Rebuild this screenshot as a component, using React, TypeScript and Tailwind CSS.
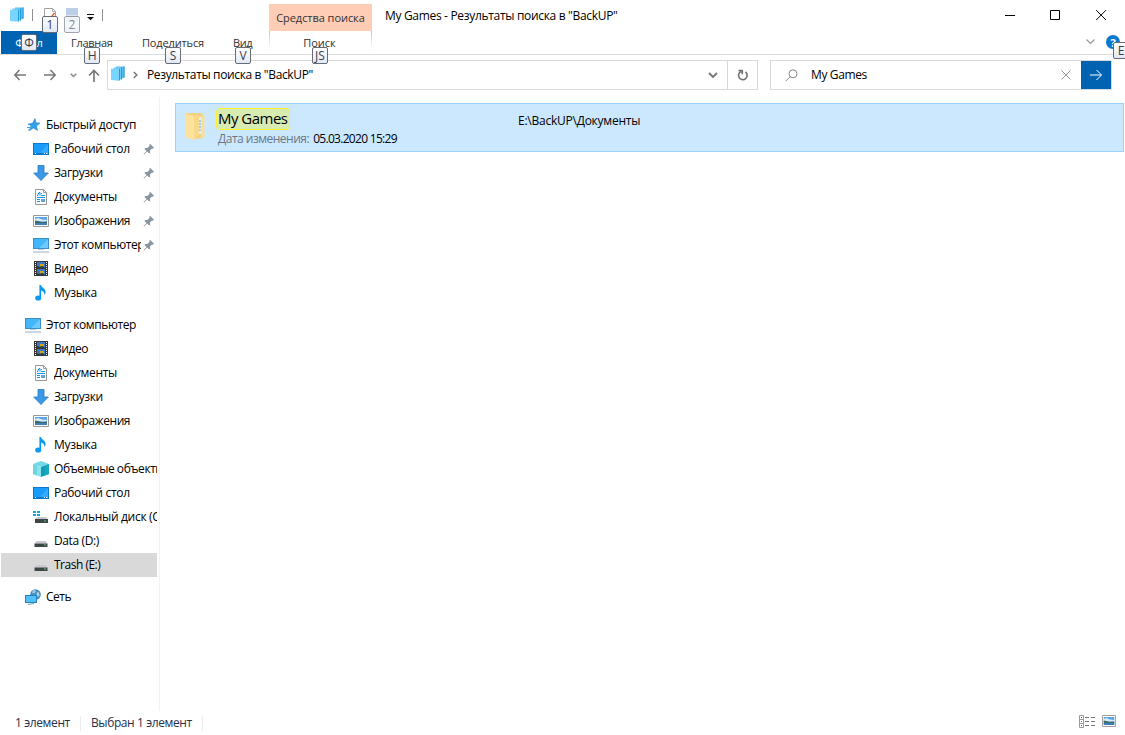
import type { ReactNode } from "react";
import clsx from "clsx";

type IconName =
  | "star"
  | "desktop"
  | "download"
  | "document"
  | "picture"
  | "computer"
  | "video"
  | "music"
  | "cube"
  | "system"
  | "drive"
  | "network";

interface NavItem {
  label: string;
  icon: IconName;
  tracking: string;
  pinned?: boolean;
  selected?: boolean;
}

interface NavGroup {
  label: string;
  icon: IconName;
  tracking: string;
  items: NavItem[];
}

const groups: NavGroup[] = [
  {
    label: "Быстрый доступ",
    icon: "star",
    tracking: "tracking-[-0.3px]",
    items: [
      { label: "Рабочий стол", icon: "desktop", tracking: "tracking-[-0.3px]", pinned: true },
      { label: "Загрузки", icon: "download", tracking: "tracking-[-0.38px]", pinned: true },
      { label: "Документы", icon: "document", tracking: "tracking-[-0.3px]", pinned: true },
      { label: "Изображения", icon: "picture", tracking: "tracking-[-0.42px]", pinned: true },
      { label: "Этот компьютер", icon: "computer", tracking: "tracking-[-0.38px]", pinned: true },
      { label: "Видео", icon: "video", tracking: "tracking-[-0.45px]" },
      { label: "Музыка", icon: "music", tracking: "tracking-[-0.3px]" },
    ],
  },
  {
    label: "Этот компьютер",
    icon: "computer",
    tracking: "tracking-[-0.4px]",
    items: [
      { label: "Видео", icon: "video", tracking: "tracking-[-0.45px]" },
      { label: "Документы", icon: "document", tracking: "tracking-[-0.3px]" },
      { label: "Загрузки", icon: "download", tracking: "tracking-[-0.38px]" },
      { label: "Изображения", icon: "picture", tracking: "tracking-[-0.42px]" },
      { label: "Музыка", icon: "music", tracking: "tracking-[-0.3px]" },
      { label: "Объемные объекты", icon: "cube", tracking: "tracking-[-0.45px]" },
      { label: "Рабочий стол", icon: "desktop", tracking: "tracking-[-0.3px]" },
      { label: "Локальный диск (C:)", icon: "system", tracking: "tracking-[-0.3px]" },
      { label: "Data (D:)", icon: "drive", tracking: "tracking-[-0.38px]" },
      { label: "Trash (E:)", icon: "drive", tracking: "tracking-[-0.5px]", selected: true },
    ],
  },
  { label: "Сеть", icon: "network", tracking: "tracking-[-0.5px]", items: [] },
];

const drawings: Record<IconName, ReactNode> = {
  star: (
    <>
      <path d="M10 1.500l1 4.300 4 .4-3.500 2.600 1 4.700-4-2.500-4 2.500 1.500-4.500-2.500-2 4-.700z" fill="#2fa2ee" stroke="#2a7fc0" strokeWidth=".6" />
      <path d="M3 7.500h2M2 10.500h3M3 13h2" stroke="#3b9bdd" />
    </>
  ),
  desktop: (
    <>
      <path d="M0 2h16v12H0z" fill="#0878d3" />
      <path d="M1 3h14v9H1z" fill="#1a9bfb" />
      <path d="M15 3v9H7z" fill="#38aaff" />
      <path d="M2 12.500h1M11 12.500h1M13 12.500h1.500" stroke="#fff" />
    </>
  ),
  download: <path d="M5 .5h6v7.500h4.300L8 15.500.7 8H5z" fill="#3b97e8" stroke="#2577bf" strokeWidth=".8" />,
  document: (
    <>
      <path d="M2.500.5h8l3 3v12h-11z" fill="#fff" stroke="#999" />
      <path d="M10.500.5v3h3" fill="none" stroke="#999" />
      <path d="M4 6.500h1v-2h1v-1h1v3M8 4.500h1M8 6.500h4M4 8.500h8M4 10.500h3M4 12.500h3" fill="none" stroke="#1b93ea" />
      <path d="M8 10h4v3H8z" fill="#5ba8e0" />
    </>
  ),
  picture: (
    <>
      <path d="M.5 2.500h15v11H.5z" fill="#fff" stroke="#999" />
      <path d="M2 4h12v8H2z" fill="#5aa5e6" />
      <path d="M2 6l3-1 4 1.500 5 .5v1.500H2z" fill="#dceaf4" />
      <path d="M2 7.500l3 .5 4 1 5-.5v1.500H2z" fill="#3c6c62" />
      <path d="M2 10h12v2H2z" fill="#3d7fb4" />
    </>
  ),
  computer: (
    <>
      <path d="M0 1h16v11H0z" fill="#3f8fc4" />
      <path d="M1 2h14v9H1z" fill="#43b5fa" />
      <path d="M15 2v9H6z" fill="#6ccaff" />
      <path d="M5 12.500h6" stroke="#bccbd5" />
      <path d="M0 15h16" stroke="#9fb1c0" />
    </>
  ),
  video: (
    <>
      <path d="M1 0h14v15H1z" fill="#383838" />
      <path d="M4 1h8v6H4zM4 8h8v6H4z" fill="#3f77c4" />
      <path d="M7 3h4v2H9v1H7zM7 10h4v2H9v1H7z" fill="#d8a021" />
      <path d="M4 5l2 1 3-1 3 2H4zM4 12l2 1 3-1 3 2H4z" fill="#263d38" />
      <path d="M2.500 1v14M13.500 1v14" stroke="#eee" strokeDasharray="1 1" />
    </>
  ),
  music: (
    <>
      <ellipse cx="5.200" cy="13" rx="3" ry="2.600" fill="#0b98f5" />
      <path d="M6.400 0H8c.3 2.700 5.100 3.500 4.600 7.500-.1 1-.6 2-1.300 2.600.5-2.300-.9-4-3.100-4.600V13H6.400z" fill="#0b98f5" />
    </>
  ),
  cube: (
    <>
      <path d="M8 0l8 3-8 3-8-3z" fill="#70d9e5" />
      <path d="M0 3l8 3v10l-8-3z" fill="#8ce3ec" />
      <path d="M16 3L8 6v10l8-3z" fill="#109db8" />
      <path d="M0 3l4 1.500V14.500L0 13z" fill="#6fd3e0" />
      <path d="M16 3l-4 1.500V14.500l4-1.500z" fill="#1ba9c0" />
    </>
  ),
  system: (
    <>
      <path d="M0 2h3v2H0zM4 2h3v2H4zM0 5h3v2H0zM4 5h3v2H4z" fill="#08a8e8" />
      <path d="M4 8h9l2 2H2z" fill="#c5c8cc" />
      <path d="M2 10h13v4H2z" fill="#424548" />
      <path d="M11 12h2" stroke="#37dc61" />
    </>
  ),
  drive: (
    <>
      <path d="M3.500 8h9l2 2.500h-13z" fill="#c7cace" />
      <path d="M1.500 10.500h13V14h-13z" fill="#424548" />
      <path d="M11 12h2" stroke="#37dc61" />
    </>
  ),
  network: (
    <>
      <circle cx="10.500" cy="5.500" r="5.300" fill="#4c8dbb" />
      <path d="M7 3l2-2 2 1-1 1.500-2 1zM12 3l2 .5.500 3-1.500 1.500-1.500-2z" fill="#a8cfe4" />
      <path d="M0 6h12v8H0z" fill="#2385bf" />
      <path d="M1 7h10v6H1z" fill="#54bfff" />
      <path d="M3 15.500l6-1" stroke="#809fb3" />
    </>
  ),
};

function NavIcon({ name }: { name: IconName }) {
  return (
    <svg width="16" height="16" viewBox="0 0 16 16" className="shrink-0">
      {drawings[name]}
    </svg>
  );
}

function PinIcon() {
  return (
    <svg width="12" height="12" viewBox="0 0 12 12" className="shrink-0">
      <path d="M7 .8l4 4-1.200.9-.8-.2-2 2 .1 2.500-1 .6-2-2L1 11.500l-.5-.5 3-3-2-2 .7-1 2.300.1 2-2-.2-1z" fill="#8796a1" />
    </svg>
  );
}

// Stacked blue panes of the search results window
function ResultsIcon() {
  return (
    <svg width="16" height="16" viewBox="0 0 16 16" className="shrink-0">
      <path d="M6 .5h8V12l-3 .5H6z" fill="#5dbdee" />
      <path d="M13.500.500l1.200-.3v11.300l-1.200.5z" fill="#259bdd" />
      <path d="M3.500 1.500h8v12h-8z" fill="#6dccf9" />
      <path d="M11 1.500l1-.3v12l-1 .5z" fill="#239ddd" />
      <path d="M1 2.800l8 .2v11.800l-8-.8z" fill="#79d5ff" />
      <path d="M9 3.200l1-.7v11.800l-1 .5z" fill="#209dde" />
    </svg>
  );
}

function KeyTip({ children, className }: { children: string; className: string }) {
  return (
    <span
      className={clsx(
        "absolute z-10 flex h-[17px] w-4 items-center justify-center rounded-[2px] border border-[#666b75] bg-linear-to-b from-white to-[#e2e9f5] text-[12px] leading-none text-[#3d3d48]",
        className,
      )}
    >
      {children}
    </span>
  );
}

function TitleBar() {
  return (
    <header className="relative flex h-[31px]">
      <div className="relative flex w-[269px] pl-[9px] pt-[7px]">
        <ResultsIcon />
        <span className="ml-[7px] mt-[2px] h-3 w-px bg-[#929292]" />
        <svg width="14" height="16" viewBox="0 0 14 16" className="ml-[10px]">
          <path d="M1.500 1.500h8l3 3v11h-11z" fill="#fff" stroke="#a2a2a2" />
          <path d="M9.500 1.500v3h3" fill="none" stroke="#b7b7b7" />
          <path d="M9 9l2.500-3" stroke="#e55c34" strokeWidth="1.500" />
        </svg>
        <svg width="14" height="16" viewBox="0 0 14 16" className="ml-[8px]">
          <path d="M1 1h12v7H1z" fill="#bccfe9" />
          <path d="M1 8h12v7H1z" fill="#dfe5ef" />
        </svg>
        <svg width="8" height="8" viewBox="0 0 8 8" className="ml-[7px] mt-[6px]">
          <path d="M1 1h7v1H1zM1 4h7L4.500 7.200z" fill="#111" />
        </svg>
        <span className="ml-[8px] mt-[2px] h-3 w-px bg-[#929292]" />
        <KeyTip className="left-[42px] top-[16px]">1</KeyTip>
        <KeyTip className="left-[64px] top-[16px] opacity-60">2</KeyTip>
      </div>
      <div className="mt-1 flex h-[27px] w-[103px] items-center justify-center bg-[#ffcdb5] pt-px text-[11px] tracking-[-0.05px] text-[#333]">
        Средства поиска
      </div>
      <h1 className="ml-[13px] mt-[7px] text-[12px] leading-[17px] tracking-[-0.32px]">
        My Games - Результаты поиска в "BackUP"
      </h1>
      <div className="ml-auto mr-[18px] mt-[10px] flex">
        <svg width="11" height="11" viewBox="0 0 11 11">
          <path d="M0 5.500h10" stroke="#000" />
        </svg>
        <svg width="11" height="11" viewBox="0 0 11 11" className="ml-[34px]">
          <path d="M.5.500h9v9h-9z" fill="none" stroke="#000" />
        </svg>
        <svg width="11" height="11" viewBox="0 0 11 11" className="ml-[35px]">
          <path d="M.2.200l9.800 9.800M10 .2L.2 10" stroke="#000" />
        </svg>
      </div>
    </header>
  );
}

function RibbonTabs() {
  return (
    <nav className="relative flex h-6 border-b border-[#dadbdc] text-[11px] leading-[24px] text-[#2f2f2f]">
      <div className="relative ml-px h-[23px] w-14 bg-[#0063b1] text-center tracking-[-0.2px] text-white">
        Файл
        <KeyTip className="left-[20px] top-[3px]">Ф</KeyTip>
      </div>
      <div className="relative ml-[14px] w-[43px] tracking-[-0.3px]">
        Главная
        <KeyTip className="left-[13px] top-[16px]">H</KeyTip>
      </div>
      <div className="relative ml-[28px] w-[62px] tracking-[-0.15px]">
        Поделиться
        <KeyTip className="left-[23px] top-[16px]">S</KeyTip>
      </div>
      <div className="relative ml-[29px] w-[36px] tracking-[-0.4px]">
        Вид
        <KeyTip className="left-[2px] top-[16px]">V</KeyTip>
      </div>
      <div className="relative flex w-[103px] justify-between">
        <span className="h-[18px] w-px bg-linear-to-b from-[#c4c4c4] to-white" />
        <span className="-ml-[2px] tracking-[-0.05px]">Поиск</span>
        <span className="h-[18px] w-px bg-linear-to-b from-[#c4c4c4] to-white" />
        <KeyTip className="left-[43px] top-[16px]">JS</KeyTip>
      </div>
      <div className="ml-auto flex">
        <svg width="9" height="6" viewBox="0 0 9 6" className="mr-[11px] mt-[8px]">
          <path d="M.5.500l4 4 4-4" fill="none" stroke="#999" strokeWidth="1.200" />
        </svg>
        <div className="mt-1 flex h-[14px] w-[14px] items-center justify-center rounded-full bg-[#0878d3] text-[11px] font-bold leading-none text-white">
          ?
        </div>
        <div className="w-[5px]" />
      </div>
      <KeyTip className="left-[1113px] top-[11px]">E</KeyTip>
    </nav>
  );
}

function AddressRow() {
  return (
    <div className="mt-[5px] flex h-[30px]">
      <div className="flex w-[107px] items-center pl-[14px]">
        <svg width="12" height="12" viewBox="0 0 12 12">
          <path d="M12 6H1M5.500 1L.8 6l4.700 5" fill="none" stroke="#777" strokeWidth="1.500" />
        </svg>
        <svg width="12" height="12" viewBox="0 0 12 12" className="ml-[18px]">
          <path d="M0 6h11M6.500 1l4.700 5-4.700 5" fill="none" stroke="#777" strokeWidth="1.500" />
        </svg>
        <svg width="7" height="5" viewBox="0 0 7 5" className="ml-[14px]">
          <path d="M.7.700l2.800 2.800L6.300.7" fill="none" stroke="#888" strokeWidth="1.400" />
        </svg>
        <svg width="12" height="13" viewBox="0 0 12 13" className="ml-[11px]">
          <path d="M6 13V1.500M1 6.500l5-5 5 5" fill="none" stroke="#777" strokeWidth="1.700" />
        </svg>
      </div>
      <div className="flex w-[651px] border border-[#d9d9d9]">
        <div className="flex flex-1 items-center pl-[2px]">
          <div className="-mt-[3px]">
            <ResultsIcon />
          </div>
          <svg width="5" height="8" viewBox="0 0 5 8" className="ml-[7px]">
            <path d="M.8 1l3 3-3 3" fill="none" stroke="#777" strokeWidth="1.500" />
          </svg>
          <span className="ml-[9px] tracking-[-0.36px]">Результаты поиска в "BackUP"</span>
          <svg width="10" height="7" viewBox="0 0 10 7" className="ml-auto mr-[9px]">
            <path d="M1 1l4 4 4-4" fill="none" stroke="#777" strokeWidth="1.900" />
          </svg>
        </div>
        <div className="flex w-[30px] items-center justify-center border-l border-[#d9d9d9]">
          {/* refresh: open circle, hook at the top left */}
          <svg width="12" height="12" viewBox="0 0 12 12">
            <path d="M4.200 2.400A4.300 4.300 0 1 0 8.500 3M1.500 1.500h3.800v3.700" fill="none" stroke="#707070" strokeWidth="1.600" />
          </svg>
        </div>
      </div>
      <div className="ml-3 flex w-[342px] items-center border border-[#d9d9d9] pl-[14px]">
        <svg width="13" height="13" viewBox="0 0 13 13">
          <circle cx="8" cy="4.800" r="4" fill="none" stroke="#888" />
          <path d="M5 7.800L.5 12.300" stroke="#888" />
        </svg>
        <span className="ml-[13px] tracking-[-0.38px]">My Games</span>
        <svg width="10" height="10" viewBox="0 0 10 10" className="ml-auto mr-[10px]">
          <path d="M.5.500l9 9M9.500.500l-9 9" stroke="#999" />
        </svg>
        <div className="flex h-7 w-[30px] items-center justify-center bg-[#0063b1]">
          <svg width="12" height="12" viewBox="0 0 12 12">
            <path d="M0 6h11.200M6.500 1l5 5-5 5" fill="none" stroke="#fff" />
          </svg>
        </div>
      </div>
    </div>
  );
}

function NavPane() {
  return (
    <aside className="w-[160px] shrink-0 space-y-2 border-r border-[#f2f2f2] pl-px pr-[2px] pt-4">
      {groups.map((group) => (
        <div key={group.label}>
          <div className="flex h-6 items-center gap-[5px] pl-6">
            <NavIcon name={group.icon} />
            <span className={clsx("whitespace-nowrap", group.tracking)}>{group.label}</span>
          </div>
          {group.items.map((item) => (
            <div
              key={item.label}
              className={clsx("flex h-6 items-center gap-[5px] pl-8", item.selected && "bg-[#d9d9d9]")}
            >
              <NavIcon name={item.icon} />
              <div
                className={clsx(
                  "overflow-hidden whitespace-nowrap",
                  item.pinned ? "w-[87px] shrink-0" : "flex-1",
                  item.tracking,
                )}
              >
                {item.label}
              </div>
              {item.pinned && (
                <div className="-ml-[3px]">
                  <PinIcon />
                </div>
              )}
            </div>
          ))}
        </div>
      ))}
    </aside>
  );
}

function SearchResult() {
  return (
    <div className="flex h-[49px] border border-[#99d1ff] bg-[#cce8ff]">
      <svg width="22" height="30" viewBox="0 0 22 30" className="ml-[8px] mt-[8px]">
        <path d="M1 1h16l2 2v23l-9 1z" fill="#efd383" />
        <path d="M14 5h4v17h-4z" fill="#e4eff6" />
        <path d="M15 9h2M15 12h2M15 15h2M15 18h2" stroke="#6aabd4" />
        <path d="M1 1l9 3v24l-9-3z" fill="#fce29a" />
        <path d="M10 4l5-1v20l-5 5z" fill="#f8d98a" />
        <path d="M17.500 4l3-1v22l-3 1z" fill="#fade93" />
      </svg>
      <div className="w-[312px] pl-[10px] pt-1">
        <div className="h-[22px] w-[74px] whitespace-nowrap rounded-[4px] border border-[#fff12b] bg-[#d8ecb2] pl-px text-[15px] leading-[19px] tracking-[-0.52px]">
          My Games
        </div>
        <div className="ml-[2px] flex gap-1 whitespace-nowrap leading-[17px]">
          <span className="tracking-[-0.5px] text-[#6d7780]">Дата изменения:</span>
          <span className="tracking-[-0.7px]">05.03.2020 15:29</span>
        </div>
      </div>
      <span className="pt-2 leading-[18px] tracking-[-0.24px]">E:\BackUP\Документы</span>
    </div>
  );
}

function StatusBar() {
  return (
    <footer className="flex h-6 items-center pl-[15px] text-[#27304d]">
      <span className="w-[66px] border-r border-[#ededed] pb-[2px] leading-[13px] tracking-[-0.38px]">1 элемент</span>
      <span className="ml-[10px] w-[112px] border-r border-[#ededed] pb-[2px] leading-[13px] tracking-[-0.4px]">
        Выбран 1 элемент
      </span>
      <svg width="16" height="13" viewBox="0 0 16 13" className="-mt-[3px] ml-auto">
        <path d="M.5.500h4v4h-4zM.500 4.500h4v4h-4zM.500 8.500h4v4h-4z" fill="#fff" stroke="#999" />
        <path d="M2 2.500h1" stroke="#444" />
        <path d="M2 6.500h1" stroke="#2387d7" />
        <path d="M2 10.500h1" stroke="#d51e2d" />
        <path d="M6 2.500h4M12 2.500h4M6 6.500h4M12 6.500h4M6 10.500h4M12 10.500h4" stroke="#777" />
      </svg>
      <svg width="14" height="12" viewBox="0 2 16 12" preserveAspectRatio="none" className="-mt-[4px] ml-[7px] mr-[9px]">
        {drawings.picture}
      </svg>
    </footer>
  );
}

export default function App() {
  return (
    <div className="flex h-[735px] w-[1125px] flex-col overflow-hidden bg-white font-['Open_Sans',sans-serif] text-[12px] text-black">
      <TitleBar />
      <RibbonTabs />
      <AddressRow />
      <div className="mt-[7px] flex min-h-0 flex-1">
        <NavPane />
        <main className="flex-1 pl-[15px] pr-px pt-[6px]">
          <SearchResult />
        </main>
      </div>
      <StatusBar />
    </div>
  );
}
